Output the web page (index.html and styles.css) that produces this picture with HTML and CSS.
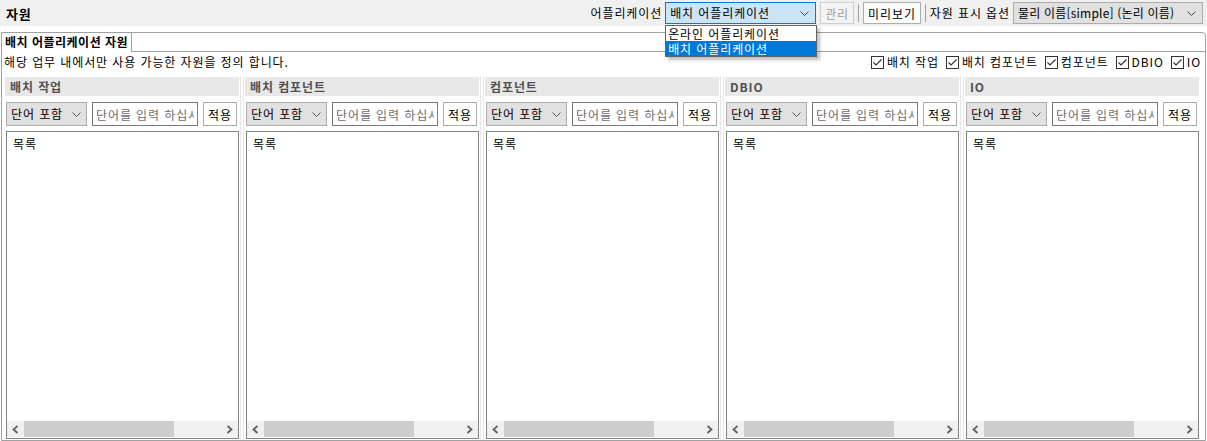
FILE: index.html
```html
<!DOCTYPE html>
<html lang="ko">
<head>
    <meta charset="UTF-8">
    <title>자원</title>
    <link rel="stylesheet" href="styles.css">
</head>
<body>

    <!-- Top bar -->
    <div class="topbar">
        <div class="title">자원</div>
        <div class="tools">
            <span class="label">어플리케이션</span>
            <div class="combo app-combo">
                <span class="combo-text">배치 어플리케이션</span>
                <svg class="chev" width="9" height="5" viewBox="0 0 9 5"><polyline points="0.5,0.5 4.5,4.5 8.5,0.5" fill="none" stroke="#444" stroke-width="1"/></svg>
                <ul class="droplist">
                    <li>온라인 어플리케이션</li>
                    <li class="selected">배치 어플리케이션</li>
                </ul>
            </div>
            <button class="btn" disabled>관리</button>
            <span class="sep"></span>
            <button class="btn">미리보기</button>
            <span class="sep"></span>
            <span class="label">자원 표시 옵션</span>
            <div class="combo view-combo">
                <span class="combo-text">물리 이름[simple] (논리 이름)</span>
                <svg class="chev" width="9" height="5" viewBox="0 0 9 5"><polyline points="0.5,0.5 4.5,4.5 8.5,0.5" fill="none" stroke="#444" stroke-width="1"/></svg>
            </div>
        </div>
    </div>

    <!-- Tab pane -->
    <div class="tabpane">
        <div class="tabstrip">
            <div class="tab">배치 어플리케이션 자원</div>
        </div>

        <div class="desc-row">
            <span class="desc">해당 업무 내에서만 사용 가능한 자원을 정의 합니다.</span>
            <div class="checks">
                <label class="check"><svg width="13" height="13" viewBox="0 0 13 13"><rect x="0.5" y="0.5" width="12" height="12" fill="#fff" stroke="#333"/><polyline points="2.5,6.5 5,9 10.5,3.5" fill="none" stroke="#333" stroke-width="1.2"/></svg>배치 작업</label>
                <label class="check"><svg width="13" height="13" viewBox="0 0 13 13"><rect x="0.5" y="0.5" width="12" height="12" fill="#fff" stroke="#333"/><polyline points="2.5,6.5 5,9 10.5,3.5" fill="none" stroke="#333" stroke-width="1.2"/></svg>배치 컴포넌트</label>
                <label class="check"><svg width="13" height="13" viewBox="0 0 13 13"><rect x="0.5" y="0.5" width="12" height="12" fill="#fff" stroke="#333"/><polyline points="2.5,6.5 5,9 10.5,3.5" fill="none" stroke="#333" stroke-width="1.2"/></svg>컴포넌트</label>
                <label class="check"><svg width="13" height="13" viewBox="0 0 13 13"><rect x="0.5" y="0.5" width="12" height="12" fill="#fff" stroke="#333"/><polyline points="2.5,6.5 5,9 10.5,3.5" fill="none" stroke="#333" stroke-width="1.2"/></svg>DBIO</label>
                <label class="check"><svg width="13" height="13" viewBox="0 0 13 13"><rect x="0.5" y="0.5" width="12" height="12" fill="#fff" stroke="#333"/><polyline points="2.5,6.5 5,9 10.5,3.5" fill="none" stroke="#333" stroke-width="1.2"/></svg>IO</label>
            </div>
        </div>

        <div class="columns">
            <div class="column">
                <div class="col-head">배치 작업</div>
                <div class="filter">
                    <div class="combo small-combo"><span class="combo-text">단어 포함</span><svg class="chev" width="9" height="5" viewBox="0 0 9 5"><polyline points="0.5,0.5 4.5,4.5 8.5,0.5" fill="none" stroke="#555" stroke-width="1"/></svg></div>
                    <input class="search" type="text" placeholder="단어를 입력 하십시오">
                    <button class="btn apply">적용</button>
                </div>
                <div class="listbox">
                    <div class="list-title">목록</div>
                    <div class="hscroll">
                        <span class="arrow"><svg width="7" height="9" viewBox="0 0 7 9"><polyline points="5.5,1 1.5,4.5 5.5,8" fill="none" stroke="#606060" stroke-width="1.8"/></svg></span>
                        <span class="thumb"></span>
                        <span class="track"></span>
                        <span class="arrow"><svg width="7" height="9" viewBox="0 0 7 9"><polyline points="1.5,1 5.5,4.5 1.5,8" fill="none" stroke="#606060" stroke-width="1.8"/></svg></span>
                    </div>
                </div>
            </div>
            <div class="sash"></div>
            <div class="column">
                <div class="col-head">배치 컴포넌트</div>
                <div class="filter">
                    <div class="combo small-combo"><span class="combo-text">단어 포함</span><svg class="chev" width="9" height="5" viewBox="0 0 9 5"><polyline points="0.5,0.5 4.5,4.5 8.5,0.5" fill="none" stroke="#555" stroke-width="1"/></svg></div>
                    <input class="search" type="text" placeholder="단어를 입력 하십시오">
                    <button class="btn apply">적용</button>
                </div>
                <div class="listbox">
                    <div class="list-title">목록</div>
                    <div class="hscroll">
                        <span class="arrow"><svg width="7" height="9" viewBox="0 0 7 9"><polyline points="5.5,1 1.5,4.5 5.5,8" fill="none" stroke="#606060" stroke-width="1.8"/></svg></span>
                        <span class="thumb"></span>
                        <span class="track"></span>
                        <span class="arrow"><svg width="7" height="9" viewBox="0 0 7 9"><polyline points="1.5,1 5.5,4.5 1.5,8" fill="none" stroke="#606060" stroke-width="1.8"/></svg></span>
                    </div>
                </div>
            </div>
            <div class="sash"></div>
            <div class="column">
                <div class="col-head">컴포넌트</div>
                <div class="filter">
                    <div class="combo small-combo"><span class="combo-text">단어 포함</span><svg class="chev" width="9" height="5" viewBox="0 0 9 5"><polyline points="0.5,0.5 4.5,4.5 8.5,0.5" fill="none" stroke="#555" stroke-width="1"/></svg></div>
                    <input class="search" type="text" placeholder="단어를 입력 하십시오">
                    <button class="btn apply">적용</button>
                </div>
                <div class="listbox">
                    <div class="list-title">목록</div>
                    <div class="hscroll">
                        <span class="arrow"><svg width="7" height="9" viewBox="0 0 7 9"><polyline points="5.5,1 1.5,4.5 5.5,8" fill="none" stroke="#606060" stroke-width="1.8"/></svg></span>
                        <span class="thumb"></span>
                        <span class="track"></span>
                        <span class="arrow"><svg width="7" height="9" viewBox="0 0 7 9"><polyline points="1.5,1 5.5,4.5 1.5,8" fill="none" stroke="#606060" stroke-width="1.8"/></svg></span>
                    </div>
                </div>
            </div>
            <div class="sash"></div>
            <div class="column">
                <div class="col-head">DBIO</div>
                <div class="filter">
                    <div class="combo small-combo"><span class="combo-text">단어 포함</span><svg class="chev" width="9" height="5" viewBox="0 0 9 5"><polyline points="0.5,0.5 4.5,4.5 8.5,0.5" fill="none" stroke="#555" stroke-width="1"/></svg></div>
                    <input class="search" type="text" placeholder="단어를 입력 하십시오">
                    <button class="btn apply">적용</button>
                </div>
                <div class="listbox">
                    <div class="list-title">목록</div>
                    <div class="hscroll">
                        <span class="arrow"><svg width="7" height="9" viewBox="0 0 7 9"><polyline points="5.5,1 1.5,4.5 5.5,8" fill="none" stroke="#606060" stroke-width="1.8"/></svg></span>
                        <span class="thumb"></span>
                        <span class="track"></span>
                        <span class="arrow"><svg width="7" height="9" viewBox="0 0 7 9"><polyline points="1.5,1 5.5,4.5 1.5,8" fill="none" stroke="#606060" stroke-width="1.8"/></svg></span>
                    </div>
                </div>
            </div>
            <div class="sash"></div>
            <div class="column">
                <div class="col-head">IO</div>
                <div class="filter">
                    <div class="combo small-combo"><span class="combo-text">단어 포함</span><svg class="chev" width="9" height="5" viewBox="0 0 9 5"><polyline points="0.5,0.5 4.5,4.5 8.5,0.5" fill="none" stroke="#555" stroke-width="1"/></svg></div>
                    <input class="search" type="text" placeholder="단어를 입력 하십시오">
                    <button class="btn apply">적용</button>
                </div>
                <div class="listbox">
                    <div class="list-title">목록</div>
                    <div class="hscroll">
                        <span class="arrow"><svg width="7" height="9" viewBox="0 0 7 9"><polyline points="5.5,1 1.5,4.5 5.5,8" fill="none" stroke="#606060" stroke-width="1.8"/></svg></span>
                        <span class="thumb"></span>
                        <span class="track"></span>
                        <span class="arrow"><svg width="7" height="9" viewBox="0 0 7 9"><polyline points="1.5,1 5.5,4.5 1.5,8" fill="none" stroke="#606060" stroke-width="1.8"/></svg></span>
                    </div>
                </div>
            </div>
        </div>
    </div>

</body>
</html>
```

FILE: styles.css
```css
/* General */
* {
    box-sizing: border-box;
}

body {
    margin: 0;
    width: 1207px;
    height: 441px;
    overflow: hidden;
    background: #fff;
    color: #000;
    font-family: "Noto Sans CJK KR", "Noto Sans", sans-serif;
    font-size: 12px;
    line-height: 1;
    letter-spacing: 0.9px;
}

svg {
    display: block;
    flex-shrink: 0;
}

/* Top bar */
.topbar {
    height: 26px;
    background: #f0f0f0;
    display: flex;
    align-items: center;
    justify-content: space-between;
    padding: 0 4px 0 6px;
}

.title {
    font-weight: 700;
    font-size: 13px;
}

.tools {
    display: flex;
    align-items: center;
    height: 22px;
}

.label {
    margin-right: 3px;
}

.combo {
    position: relative;
    display: flex;
    align-items: center;
    justify-content: space-between;
    height: 22px;
    border: 1px solid #adadad;
    background: #e1e1e1;
    padding: 0 6px 0 4px;
    flex-shrink: 0;
}

.app-combo {
    width: 151px;
    background: #cce4f7;
    border-color: #0078d7;
}

.view-combo {
    width: 190px;
    letter-spacing: 0.2px;
}

.combo-text {
    white-space: nowrap;
}

/* open dropdown of the application combo */
.droplist {
    position: absolute;
    top: 22px;
    left: -1px;
    width: 152px;
    margin: 0;
    padding: 0;
    list-style: none;
    background: #fff;
    border: 1px solid #646464;
    box-shadow: 3px 3px 3px rgba(0, 0, 0, 0.25);
    z-index: 5;
}

.droplist li {
    height: 15px;
    line-height: 15px;
    padding-left: 2px;
}

.droplist li.selected {
    background: #0078d7;
    color: #fff;
}

.btn {
    height: 22px;
    padding: 0 4px;
    border: 1px solid #adadad;
    background: #fdfdfd;
    font-family: inherit;
    font-size: 12px;
    letter-spacing: inherit;
    color: #000;
}

.btn:disabled {
    color: #a0a0a0;
    border-color: #cfcfcf;
    background: #f4f4f4;
    margin-left: 4px;
}

.sep {
    width: 1px;
    height: 18px;
    background: #a0a0a0;
    margin: 0 4px;
}

/* Tab pane */
.tabpane {
    margin: 6px 1px 0 1px;
    height: 409px;
    border: 1px solid #a0a0a0;
    border-radius: 0 4px 0 0;
    display: flex;
    flex-direction: column;
}

.tabstrip {
    height: 19px;
    border-bottom: 1px solid #a0a0a0;
    display: flex;
}

.tab {
    height: 19px;
    background: #fff;
    border-right: 1px solid #a0a0a0;
    padding: 3px 3px 0 3px;
    font-weight: 700;
    letter-spacing: 0.5px;
}

.desc-row {
    height: 20px;
    display: flex;
    align-items: center;
    justify-content: space-between;
    padding: 0 4px 0 2px;
}

.checks {
    display: flex;
    gap: 7px;
}

.check {
    display: flex;
    align-items: center;
    gap: 3px;
}

/* Columns */
.columns {
    flex: 1;
    display: flex;
    padding: 5px 0 0 3px;
    min-height: 0;
}

.column {
    width: 234px;
    display: flex;
    flex-direction: column;
}

.sash {
    width: 4px;
    margin: 0 1px;
    border-left: 1px solid #e6e6e6;
    border-right: 1px solid #e6e6e6;
}

.col-head {
    height: 19px;
    background: #e8e8e8;
    color: #505050;
    font-weight: 700;
    padding: 4px 0 0 5px;
}

.filter {
    display: flex;
    align-items: center;
    height: 24px;
    margin-top: 6px;
    padding-left: 1px;
}

.small-combo {
    width: 81px;
    height: 24px;
    padding: 0 5px 0 4px;
}

.search {
    width: 106px;
    height: 24px;
    margin-left: 5px;
    border: 1px solid #7a7a7a;
    padding: 0 3px;
    font-family: inherit;
    font-size: 12px;
    letter-spacing: inherit;
    outline: none;
}

.search::placeholder {
    color: #6d6d6d;
}

.apply {
    width: 34px;
    height: 24px;
    margin-left: 5px;
    padding: 0;
    background: #fff;
}

.listbox {
    flex: 1;
    margin: 5px 0 1px 1px;
    border: 1px solid #828282;
    display: flex;
    flex-direction: column;
    justify-content: space-between;
}

.list-title {
    padding: 6px 0 0 6px;
}

.hscroll {
    height: 16px;
    display: flex;
    align-items: stretch;
    background: #f0f0f0;
    margin-bottom: 1px;
}

.arrow {
    width: 17px;
    display: flex;
    align-items: center;
    justify-content: center;
}

.thumb {
    width: 150px;
    background: #cdcdcd;
}

.track {
    flex: 1;
}
```
